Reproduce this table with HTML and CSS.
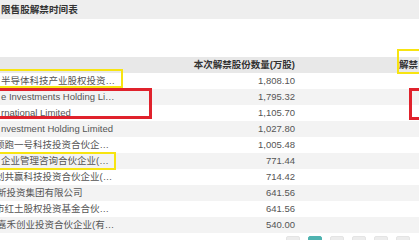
FILE: index.html
```html
<!DOCTYPE html>
<html lang="zh">
<head>
<meta charset="utf-8">
<link rel="stylesheet" href="styles.css">
</head>
<body>
<div class="page">
  <div class="title">限售股解禁时间表</div>
  <div class="spacer"></div>
  <div class="table">
    <div class="row head">
      <div class="c1"></div>
      <div class="c2">本次解禁股份数量(万股)</div>
      <div class="c3">解禁日期</div>
    </div>
    <div class="row">
      <div class="c1"><span class="s0">半导体科技产业股权投资基金</span></div>
      <div class="c2">1,808.10</div><div class="c3"></div>
    </div>
    <div class="row alt">
      <div class="c1"><span class="s0">e Investments Holding Limited</span></div>
      <div class="c2">1,795.32</div><div class="c3"></div>
    </div>
    <div class="row">
      <div class="c1"><span class="s0">rnational Limited</span></div>
      <div class="c2">1,105.70</div><div class="c3"></div>
    </div>
    <div class="row alt">
      <div class="c1"><span class="s0">nvestment Holding Limited</span></div>
      <div class="c2">1,027.80</div><div class="c3"></div>
    </div>
    <div class="row">
      <div class="c1"><span class="s5">领跑一号科技投资合伙企业(有限合伙)</span></div>
      <div class="c2">1,005.48</div><div class="c3"></div>
    </div>
    <div class="row alt">
      <div class="c1"><span class="s0">企业管理咨询合伙企业(有限合伙)</span></div>
      <div class="c2">771.44</div><div class="c3"></div>
    </div>
    <div class="row">
      <div class="c1"><span class="s5">创共赢科技投资合伙企业(有限合伙)</span></div>
      <div class="c2">714.42</div><div class="c3"></div>
    </div>
    <div class="row alt">
      <div class="c1"><span class="s3">新投资集团有限公司</span></div>
      <div class="c2">641.56</div><div class="c3"></div>
    </div>
    <div class="row">
      <div class="c1"><span class="s5">市红土股权投资基金合伙企业(有限合伙)</span></div>
      <div class="c2">641.56</div><div class="c3"></div>
    </div>
    <div class="row alt">
      <div class="c1"><span class="s3">嘉禾创业投资合伙企业(有限合伙)</span></div>
      <div class="c2">540.00</div><div class="c3"></div>
    </div>
  </div>
  <div class="pager">
    <span class="pg"></span>
    <span class="pg on"></span>
    <span class="pg"></span>
    <span class="pg"></span>
    <span class="pg"></span>
    <span class="pg"></span>
  </div>

  <div class="mark yel y1"></div>
  <div class="mark red r1"></div>
  <div class="mark yel y2"></div>
  <div class="mark yel y3"></div>
  <div class="mark red r2"></div>
</div>
</body>
</html>
```
FILE: styles.css
```css
html, body {
  margin: 0;
  padding: 0;
  background: #fff;
}
.page {
  position: relative;
  width: 419px;
  height: 240px;
  overflow: hidden;
  font-family: "Liberation Sans", "Noto Sans CJK SC", sans-serif;
  font-size: 9.5px;
  color: #555;
}
.title {
  height: 19px;
  line-height: 19px;
  background: #eeeeee;
  padding-left: 1px;
  font-weight: bold;
  color: #333;
  font-size: 9.6px;
}
.spacer {
  height: 38px;
}
.table {
  display: flex;
  flex-direction: column;
}
.row {
  display: grid;
  grid-template-columns: 117px 183px 1fr;
  height: 16px;
  line-height: 16px;
  background: #fff;
}
.row.alt {
  background: #f3f3f3;
}
.row.head {
  background: #e8e8e8;
  color: #333;
  font-weight: bold;
}
.c1 {
  overflow: hidden;
  white-space: nowrap;
  text-overflow: ellipsis;
}
.c2 {
  text-align: right;
  padding-right: 5px;
  white-space: nowrap;
}
.c3 {
  padding-left: 99px;
  white-space: nowrap;
  overflow: hidden;
}
.s0 { margin-left: 1px; }
.s3 { margin-left: -3px; }
.s5 { margin-left: -5px; }
.pager {
  display: flex;
  gap: 8px;
  margin-top: 3px;
  padding-left: 286px;
}
.pg {
  width: 14px;
  height: 14px;
  background: #ececec;
  border: 1px solid #e4e4e4;
  box-sizing: border-box;
  border-radius: 2px;
}
.pg.on {
  background: #4fb3b0;
  border-color: #4fb3b0;
}
.mark {
  position: absolute;
  box-sizing: border-box;
}
.yel {
  border: 2.5px solid #f7e411;
}
.red {
  border: 3px solid #e0222c;
}
.y1 { left: -5px; top: 69px; width: 128px; height: 19px; }
.r1 { left: -5px; top: 88px; width: 157px; height: 31px; }
.y2 { left: -5px; top: 152px; width: 121px; height: 18px; }
.y3 { left: 397px; top: 49px; width: 30px; height: 25px; }
.r2 { left: 409px; top: 88px; width: 20px; height: 32px; }
```
